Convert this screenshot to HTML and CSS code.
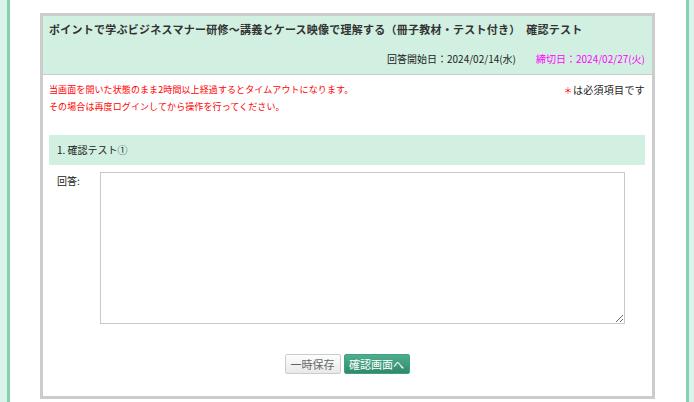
FILE: index.html
```html
<!DOCTYPE html>
<html lang="ja">
<head>
    <meta charset="UTF-8">
    <meta name="viewport" content="width=device-width, initial-scale=1.0">
    <title>確認テスト</title>
    <link rel="stylesheet" href="styles.css">
</head>
<body>

<div class="page">
    <div class="card">

        <!-- ヘッダー -->
        <div class="card-head">
            <h1>ポイントで学ぶビジネスマナー研修～講義とケース映像で理解する（冊子教材・テスト付き）　確認テスト</h1>
            <p class="dates">回答開始日：2024/02/14(水)　　<span class="deadline">締切日：2024/02/27(火)</span></p>
        </div>

        <div class="card-body">
            <!-- 注意書き -->
            <div class="notice">
                <p class="warn">当画面を開いた状態のまま2時間以上経過するとタイムアウトになります。<br>その場合は再度ログインしてから操作を行ってください。</p>
                <p class="required"><span class="mark">＊</span>は必須項目です</p>
            </div>

            <!-- 設問 -->
            <div class="question">1. 確認テスト①</div>
            <div class="answer">
                <label for="answer1">回答:</label>
                <textarea id="answer1"></textarea>
            </div>

            <div class="actions">
                <button class="btn btn-save">一時保存</button>
                <button class="btn btn-next">確認画面へ</button>
            </div>
        </div>

    </div>
</div>

</body>
</html>
```

FILE: styles.css
```css
html, body {
    height: 100%;
}
body {
    margin: 0;
    padding: 0 5px 0 7px;
    background: #d9f3ea;
    font-family: "Noto Sans CJK JP", "Noto Sans", sans-serif;
    color: #333;
}
.page {
    box-sizing: border-box;
    min-height: 100%;
    background: #fff;
    border-left: 3px solid #88cfb0;
    border-right: 3px solid #88cfb0;
    padding: 13px 31px 0 30px;
    overflow: hidden;
}
.card {
    border: 3px solid #cccccc;
    background: #fff;
}
.card-head {
    background: #d1f0e1;
    border-bottom: 1px solid #cccccc;
    padding: 6px 7px 8px 6px;
}
.card-head h1 {
    margin: 0;
    font-size: 11px;
    line-height: 14px;
    font-weight: bold;
    letter-spacing: 0.25px;
    color: #333;
}
.dates {
    margin: 16px 0 0;
    font-size: 10px;
    line-height: 14px;
    text-align: right;
    color: #222;
}
.deadline {
    color: #ff00ff;
}
.card-body {
    padding: 6px 7px 22px 6px;
}
.notice {
    display: flex;
    justify-content: space-between;
    align-items: flex-start;
}
.warn {
    margin: 0;
    font-size: 9px;
    line-height: 17px;
    letter-spacing: 0.1px;
    color: #ff0000;
}
.required {
    margin: 0;
    font-size: 10px;
    line-height: 17px;
    letter-spacing: 0.3px;
    color: #222;
}
.mark {
    color: #ff0000;
    font-size: 9px;
}
.question {
    margin-top: 20px;
    background: #d1f0e1;
    height: 30px;
    line-height: 30px;
    padding-left: 8px;
    font-size: 10px;
    color: #222;
}
.answer {
    display: flex;
    align-items: flex-start;
    margin-top: 7px;
    padding-left: 8px;
}
.answer label {
    width: 43px;
    font-size: 10px;
    line-height: 18px;
    color: #222;
}
.answer textarea {
    box-sizing: border-box;
    width: 525px;
    height: 152px;
    border: 1px solid #c8c8c8;
    margin: 0;
    padding: 2px;
}
.actions {
    display: flex;
    justify-content: center;
    gap: 3px;
    margin-top: 30px;
}
.btn {
    box-sizing: border-box;
    height: 20px;
    padding: 0;
    font-family: "Noto Sans CJK JP", sans-serif;
    font-size: 11px;
    line-height: 18px;
    white-space: nowrap;
    border-radius: 2px;
    cursor: pointer;
}
.btn-save {
    width: 56px;
    background: linear-gradient(#fdfdfd, #e9e9e9);
    border: 1px solid #cccccc;
    color: #666;
}
.btn-next {
    width: 66px;
    background: linear-gradient(#4fae8e, #2f8a6c);
    border: 1px solid #3da37a;
    color: #fff;
}
```
